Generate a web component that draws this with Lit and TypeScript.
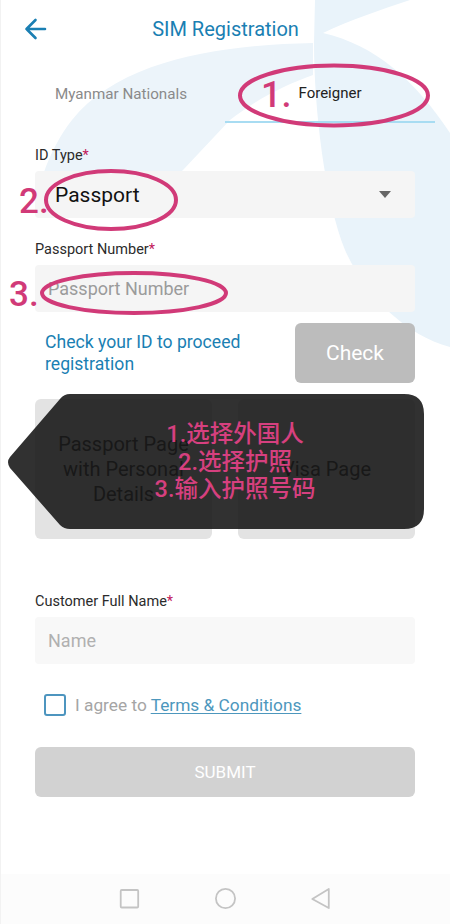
import { LitElement, html, css, svg } from 'lit';
import { customElement } from 'lit/decorators.js';

const ring = (cx: number, cy: number, rx: number, ry: number) => svg`
  <ellipse cx=${cx} cy=${cy} rx=${rx} ry=${ry} fill="none" stroke="#d13a78" stroke-width="4" />
`;

@customElement('app-root')
export class AppRoot extends LitElement {
  static styles = css`
    :host {
      display: block;
      position: relative;
      width: 450px;
      height: 924px;
      overflow: hidden;
      background: #fff;
      font-family: Roboto, 'Noto Sans CJK SC', sans-serif;
      color: #222;
    }
    .bg, .marks { position: absolute; inset: 0; width: 450px; height: 924px; }
    .page { position: relative; display: flex; flex-direction: column; height: 924px; border-left: 1px solid #f2f2f2; box-sizing: border-box; }
    .header { display: flex; align-items: center; height: 57px; position: relative; justify-content: center; }
    .back { position: absolute; left: 22px; top: 17px; width: 24px; height: 24px; }
    .title { font-size: 20px; color: #1a7fb3; }
    .tabs { display: flex; height: 66px; }
    .tab { display: flex; align-items: center; justify-content: center; font-size: 15.2px; color: #8a8a8a; padding-top: 8px; box-sizing: border-box; }
    .tab.first { width: 224px; padding-left: 16px; }
    .tab.active { width: 210px; font-size: 15px; color: #222; border-bottom: 2px solid #a8dcf2; }
    .form { display: flex; flex-direction: column; padding: 22px 35px 0 34px; }
    label { font-size: 14.5px; line-height: 20px; color: #2b2b2b; padding-top: 1px; margin-bottom: 5px; }
    label b { color: #c2185b; font-weight: 400; }
    .field { display: flex; align-items: center; justify-content: space-between; height: 47px; background: #f5f5f5; border-radius: 4px; padding: 0 13px; font-size: 18px; color: #9b9b9b; margin-bottom: 21px; }
    .field.select { color: #111; font-size: 21px; padding: 0 24px 0 20px; }
    .caret { width: 0; height: 0; border: 6px solid transparent; border-top: 7px solid #666; border-bottom: 0; }
    .check-row { display: flex; align-items: center; justify-content: space-between; margin-top: -10px; height: 60px; margin-bottom: 16px; }
    .check-row p { margin: 0 0 0 10px; font-size: 17.6px; line-height: 22px; color: #1a7fb3; width: 230px; }
    .btn { display: flex; align-items: center; justify-content: center; border-radius: 6px; color: #fff; }
    .check { width: 120px; height: 60px; background: #bcbcbc; font-size: 21px; }
    .cards { display: flex; justify-content: space-between; height: 140px; margin-bottom: 52px; }
    .card { width: 177px; background: #e3e3e3; border-radius: 6px; display: flex; align-items: center; justify-content: center; text-align: center; font-size: 20px; line-height: 25px; color: #333; }
    .field.name { margin-bottom: 30px; background: #f8f8f8; color: #b0b0b0; }
    .agree { display: flex; align-items: center; gap: 9px; padding-left: 9px; font-size: 17.3px; color: #a5a5a5; height: 22px; margin-bottom: 31px; }
    .box { width: 18px; height: 18px; border: 2.5px solid #4d95bf; border-radius: 3px; flex: none; }
    .agree a { color: #4d97bd; text-decoration: underline; text-underline-offset: 2px; }
    .submit { height: 50px; background: #d2d2d2; font-size: 17px; }
    .nav { margin-top: auto; height: 50px; background: #fcfcfc; display: flex; align-items: center; justify-content: center; }
    .nav svg { width: 450px; height: 50px; }
    .tip { position: absolute; left: 8px; top: 394px; width: 416px; height: 135px; }
    .tip svg { position: absolute; inset: 0; }
    .tip-text { position: absolute; left: 0; right: 0; top: 27px; text-align: center; padding-left: 38px; box-sizing: border-box; width: 416px; font-size: 23.5px; font-weight: 500; line-height: 27.5px; color: #d6407f; }
    .num { position: absolute; color: #d13a78; line-height: 1; font-weight: 500; }
    .n1 { left: 261px; top: 77px; font-size: 36px; }
    .n2 { left: 19px; top: 184px; font-size: 35px; }
    .n3 { left: 9px; top: 277px; font-size: 35px; }
  `;

  render() {
    return html`
      <svg class="bg" viewBox="0 0 450 924" aria-hidden="true">
        <path fill="#ecf4fa" d="M313 43 C 220 45 120 60 72 120 C 60 135 50 155 44 172 L 44 215 L 135 215 L 183 170 L 230 120 C 255 100 285 85 313 75 Z" />
        <path fill="#e9f3fa" d="M315 0 L 410 0 C 380 10 350 20 323 33 C 375 45 415 80 450 133 L 450 347 C 405 335 365 295 345 250 C 325 200 314 110 314 43 Z" />
      </svg>
      <div class="page">
        <div class="header">
          <svg class="back" viewBox="0 0 24 24" aria-hidden="true">
            <path d="M22 12H3.5M12.5 3 3.5 12l9 9" fill="none" stroke="#1a7fb3" stroke-width="2.6" stroke-linecap="round" stroke-linejoin="round" />
          </svg>
          <span class="title">SIM Registration</span>
        </div>
        <div class="tabs">
          <div class="tab first">Myanmar Nationals</div>
          <div class="tab active">Foreigner</div>
        </div>
        <div class="form">
          <label>ID Type<b>*</b></label>
          <div class="field select">Passport<span class="caret"></span></div>
          <label>Passport Number<b>*</b></label>
          <div class="field">Passport Number</div>
          <div class="check-row">
            <p>Check your ID to proceed registration</p>
            <div class="btn check">Check</div>
          </div>
          <div class="cards">
            <div class="card">Passport Page<br />with Personal<br />Details</div>
            <div class="card">Visa Page</div>
          </div>
          <label>Customer Full Name<b>*</b></label>
          <div class="field name">Name</div>
          <div class="agree"><span class="box"></span><span>I agree to <a>Terms &amp; Conditions</a></span></div>
          <div class="btn submit">SUBMIT</div>
        </div>
        <div class="nav">
          <svg viewBox="0 0 450 50" aria-hidden="true" fill="none" stroke="#c4c4c4" stroke-width="1.8" stroke-linejoin="round">
            <rect x="120" y="16" width="17.5" height="17.5" rx="1" />
            <circle cx="225" cy="24.5" r="9.6" />
            <path d="M328.5 15 L312 25 L328.5 34 Z" />
          </svg>
        </div>
      </div>
      <div class="tip">
        <svg width="416" height="135" viewBox="0 0 416 135" aria-hidden="true">
          <path fill="#141414" fill-opacity="0.88" d="M62 0 H396 Q416 0 416 20 V115 Q416 135 396 135 H62 Q56 135 52 131 L2 74 Q-2 68 2 63 L52 5 Q56 0 62 0 Z" />
        </svg>
        <div class="tip-text">1.选择外国人<br />2.选择护照<br />3.输入护照号码</div>
      </div>
      <svg class="marks" viewBox="0 0 450 924" aria-hidden="true">
        ${ring(334, 95.5, 94, 30)}
        ${ring(111, 200, 65, 29)}
        ${ring(134, 293, 92, 20)}
      </svg>
      <span class="num n1">1.</span>
      <span class="num n2">2.</span>
      <span class="num n3">3.</span>
    `;
  }
}
